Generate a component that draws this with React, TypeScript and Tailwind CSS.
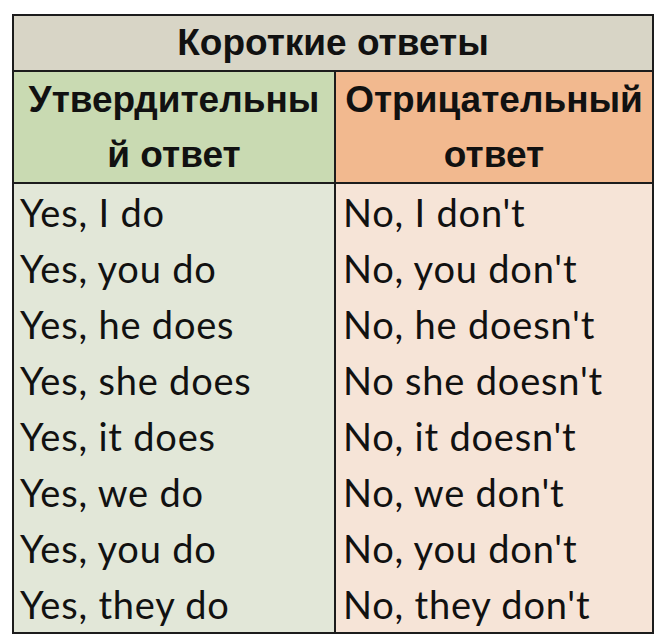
const ROWS = [
  ["Yes, I do", "No, I don't"],
  ["Yes, you do", "No, you don't"],
  ["Yes, he does", "No, he doesn't"],
  ["Yes, she does", "No she doesn't"],
  ["Yes, it does", "No, it doesn't"],
  ["Yes, we do", "No, we don't"],
  ["Yes, you do", "No, you don't"],
  ["Yes, they do", "No, they don't"],
];

export default function App() {
  return (
    <div className="min-h-[642px] w-[668px] bg-white pl-[12px] pt-[14px]">
      <div className="w-[642px] border-2 border-[#1c1c1c]">
        <div className="flex h-[56px] items-center justify-center border-b-2 border-[#1c1c1c] bg-[#d8d5c6] font-['Liberation_Sans',Arial,sans-serif] text-[37px] font-bold text-[#111]">
          Короткие ответы
        </div>
        <div className="grid grid-cols-[320px_1fr] border-b-2 border-[#1c1c1c] font-['Liberation_Sans',Arial,sans-serif] text-[37px] leading-[55px] font-bold text-[#111]">
          <div className="h-[110px] bg-[#c9dab2] text-center">
            Утвердительны
            <br />й ответ
          </div>
          <div className="h-[110px] border-l-2 border-[#1c1c1c] bg-[#f2b98f] text-center">
            Отрицательный
            <br />
            ответ
          </div>
        </div>
        <div className="grid grid-cols-[320px_1fr] font-['Lato',sans-serif] text-[38px] leading-[56px] tracking-[0.8px] text-[#111]">
          <div className="bg-[#e2e7d8] pl-[6px]">
            {ROWS.map(([yes], i) => (
              <div key={i} className="h-[56px] whitespace-nowrap">
                {yes}
              </div>
            ))}
          </div>
          <div className="border-l-2 border-[#1c1c1c] bg-[#f6e4d7] pl-[7px]">
            {ROWS.map(([, no], i) => (
              <div key={i} className="h-[56px] whitespace-nowrap">
                {no}
              </div>
            ))}
          </div>
        </div>
      </div>
    </div>
  );
}
